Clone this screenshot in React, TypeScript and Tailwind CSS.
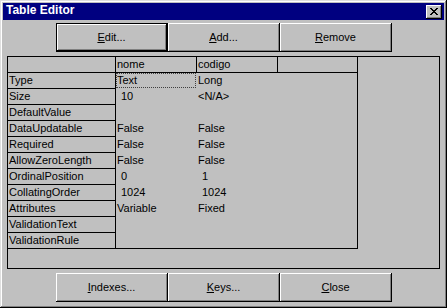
import React from "react";

// dados da grade: [propriedade, nome, codigo]
const rows: [string, string, string][] = [
  ["Type", "Text", "Long"],
  ["Size", "10", "<N/A>"],
  ["DefaultValue", "", ""],
  ["DataUpdatable", "False", "False"],
  ["Required", "False", "False"],
  ["AllowZeroLength", "False", "False"],
  ["OrdinalPosition", "0", "1"],
  ["CollatingOrder", "1024", "1024"],
  ["Attributes", "Variable", "Fixed"],
  ["ValidationText", "", ""],
  ["ValidationRule", "", ""],
];

const bevel =
  "shadow-[inset_-1px_-1px_#000,inset_1px_1px_#fff,inset_-2px_-2px_#808080]";
const bevelDefault =
  "shadow-[inset_0_0_0_1px_#000,inset_-2px_-2px_#000,inset_2px_2px_#fff,inset_-3px_-3px_#808080]";

const Button = ({
  hot,
  rest,
  isDefault,
}: {
  hot: string;
  rest: string;
  isDefault?: boolean;
}) => (
  <div
    className={`w-[112px] h-[29px] flex items-center justify-center bg-[#c0c0c0] text-[11px] text-black ${
      isDefault ? bevelDefault : bevel
    }`}
  >
    <span>
      <u className="underline-offset-[1px]">{hot}</u>
      {rest}
    </span>
  </div>
);

const pad = (v: string) => (/^\d/.test(v) ? "pl-[5px]" : "pl-[1px]");

export default function App() {
  return (
    <div
      className="w-[447px] h-[308px] bg-[#c0c0c0] p-[3px] flex flex-col shadow-[inset_-1px_-1px_#000,inset_1px_1px_#dfdfdf,inset_-2px_-2px_#808080,inset_2px_2px_#fff]"
      style={{ fontFamily: '"Liberation Sans", Arial, sans-serif' }}
    >
      {/* barra de título */}
      <div className="h-[17px] bg-[#000080] flex items-start justify-between">
        <span className="pl-[3px] text-[12px] leading-[14px] font-bold text-white">
          Table Editor
        </span>
        <div
          className={`mt-[2px] mr-[2px] w-[16px] h-[14px] bg-[#c0c0c0] flex items-center justify-center ${bevel}`}
        >
          <svg width="8" height="7" viewBox="0 0 8 7" className="-mt-[1px]">
            <path
              d="M0 0h2v1h1v1h2V1h1V0h2v1H7v1H6v1H5v1h1v1h1v1h1v1H6V6H5V5H3v1H2v1H0V6h1V5h1V4h1V3H2V2H1V1H0z"
              fill="#000"
            />
          </svg>
        </div>
      </div>

      <div className="mt-[3px] flex justify-center">
        <Button hot="E" rest="dit..." isDefault />
        <Button hot="A" rest="dd..." />
        <Button hot="R" rest="emove" />
      </div>

      {/* grade */}
      <div className="mt-[4px] mx-[4px] h-[213px] border border-black">
        <div className="w-[350px] border-r border-b border-black text-[11px] leading-[15px] text-black">
          <div className="flex h-[16px] border-b border-black">
            <div className="w-[108px] border-r border-black" />
            <div className="w-[81px] border-r border-black pl-[1px]">nome</div>
            <div className="w-[81px] border-r border-black pl-[1px]">codigo</div>
            <div className="flex-1" />
          </div>
          {rows.map(([k, a, b], i) => {
            const last = i === rows.length - 1;
            return (
              <div key={k} className={`flex ${last ? "h-[15px]" : "h-[16px]"}`}>
                <div
                  className={`w-[108px] pl-[1px] border-r border-black ${
                    last ? "" : "border-b"
                  }`}
                >
                  {k}
                </div>
                <div className="w-[81px]">
                  {i === 0 ? (
                    <div className="w-[80px] h-[15px] border border-dotted border-[#404040] leading-[13px]">
                      {a}
                    </div>
                  ) : (
                    <div className={pad(a)}>{a}</div>
                  )}
                </div>
                <div className={`w-[81px] ${pad(b)}`}>{b}</div>
              </div>
            );
          })}
        </div>
      </div>

      <div className="mt-[4px] flex justify-center">
        <Button hot="I" rest="ndexes..." />
        <Button hot="K" rest="eys..." />
        <Button hot="C" rest="lose" />
      </div>
    </div>
  );
}
